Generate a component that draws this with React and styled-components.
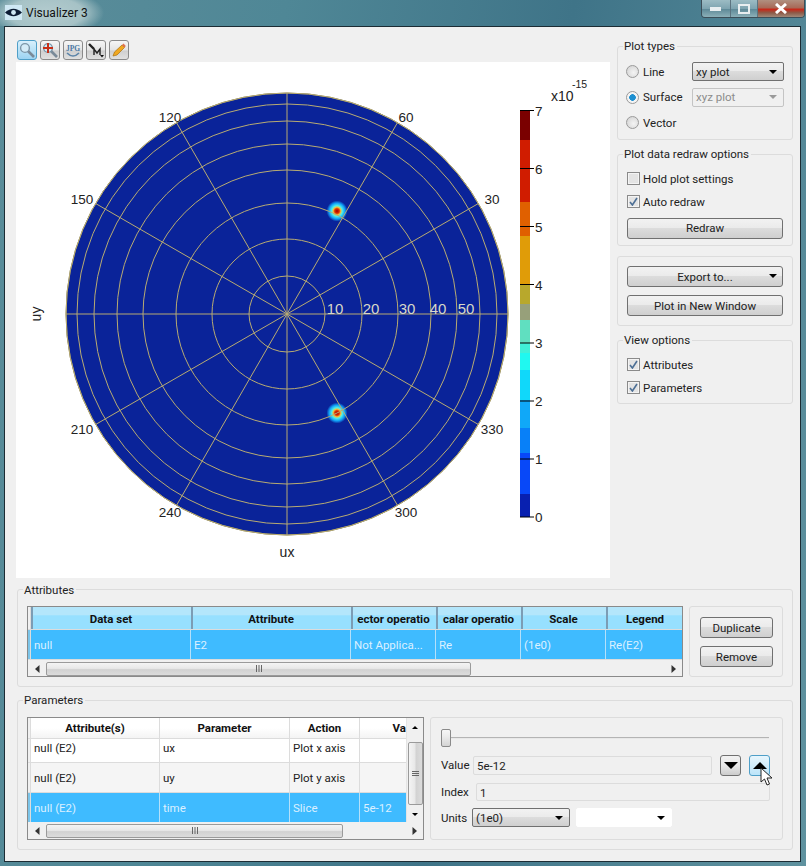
import React from "react";
import styled, { createGlobalStyle } from "styled-components";

const GlobalStyle = createGlobalStyle`
  html, body {
    margin: 0;
    padding: 0;
    width: 806px;
    height: 866px;
    overflow: hidden;
    background: #3f6f80;
    font-family: Roboto, "Noto Sans", sans-serif;
    font-size: 11.5px;
    color: #222;
  }
  * { box-sizing: border-box; }
`;

const Win = styled.div`
  width: 806px;
  height: 866px;
  display: flex;
  flex-direction: column;
  padding: 0 5px 4px 4px;
  background: linear-gradient(100deg, #5b8d9a 0%, #4f8796 30%, #3f7488 60%, #5f929f 100%);
`;

const TitleBar = styled.div`
  height: 26px;
  margin: 0 -5px 0 -4px;
  flex: none;
  display: flex;
  align-items: flex-start;
  justify-content: space-between;
  position: relative;
  background: radial-gradient(ellipse 58px 24px at 46px 13px, #b4cccf 0%, #a6c2c6 65%, transparent 100%);
`;

const TitleText = styled.div`
  display: flex;
  align-items: center;
  gap: 4px;
  padding: 4px 0 0 5px;
  font-size: 12px;
  color: #111;
`;

const Caption = styled.div`
  display: flex;
  height: 18px;
  margin-right: 1px;
  border: 1px solid #3c4e58;
  border-top: none;
  border-radius: 0 0 4px 4px;
  overflow: hidden;
`;

const CaptionBtn = styled.div`
  width: ${(p) => p.$w}px;
  display: flex;
  align-items: center;
  justify-content: center;
  border-left: ${(p) => (p.$first ? "none" : "1px solid #5c7480")};
  background: ${(p) =>
    p.$close
      ? "linear-gradient(#b09080 0%, #a86a58 45%, #c82818 55%, #8c5a48 75%, #a08878 100%)"
      : "linear-gradient(#9cbcc4 0%, #7ea4b0 50%, #5f8a98 55%, #8cb0b8 100%)"};
`;

const Body = styled.div`
  flex: 1;
  background: #f0f0f0;
  border: 1px solid #1c2c34;
  padding: 13px 7px 9px 11px;
  display: flex;
  flex-direction: column;
`;

const TopRow = styled.div`
  display: flex;
  gap: 7px;
  height: 549px;
  flex: none;
`;

const PlotColumn = styled.div`
  width: 594px;
  display: flex;
  flex-direction: column;
`;

const ToolBar = styled.div`
  display: flex;
  gap: 3px;
  height: 22px;
  padding-left: 1px;
`;

const ToolBtn = styled.div`
  width: 20px;
  height: 20px;
  border: 1px solid ${(p) => (p.$active ? "#4f9fc8" : "#8a8a8a")};
  border-radius: 3px;
  background: ${(p) =>
    p.$active
      ? "linear-gradient(#d8f0fc, #9cd4f2)"
      : "linear-gradient(#f6f6f6, #e4e4e4 50%, #cfcfcf 55%, #e0e0e0)"};
  display: flex;
  align-items: center;
  justify-content: center;
`;

const PlotArea = styled.div`
  width: 594px;
  height: 516px;
  background: #fff;
`;

const SideColumn = styled.div`
  width: 176px;
  display: flex;
  flex-direction: column;
  padding-top: 6px;
`;

const Group = styled.div`
  margin-top: ${(p) => p.$mt || 0}px;
  height: ${(p) => p.$h}px;
  width: ${(p) => (p.$w ? `${p.$w}px` : "auto")};
  flex: none;
  border: 1px solid #dcdcdc;
  border-radius: 3px;
  position: relative;
`;

const Legend = styled.div`
  position: absolute;
  top: ${(p) => p.$top || -8}px;
  left: 5px;
  padding: 0 2px 0 1px;
  line-height: 15px;
  background: #f0f0f0;
`;

const Row = styled.div`
  display: flex;
  align-items: center;
  height: ${(p) => p.$h || 25}px;
  margin-top: ${(p) => p.$mt || 0}px;
  padding-left: ${(p) => p.$pl || 0}px;
  flex: none;
`;

const Inner = styled.div`
  padding: ${(p) => p.$p || "0"};
  display: flex;
  flex-direction: column;
  gap: ${(p) => p.$gap || 0}px;
`;

const RadioDot = styled.span`
  width: 13px;
  height: 13px;
  border-radius: 50%;
  border: 1px solid #9a9a9a;
  background: ${(p) =>
    p.$on
      ? "radial-gradient(circle, #1d8fd0 0 3px, #f4f4f4 3.6px)"
      : "radial-gradient(circle at 60% 60%, #f4f4f4, #cfcfcf)"};
  margin-right: 4px;
  flex: none;
`;

const RadioLabel = styled.span`
  width: 49px;
  flex: none;
`;

const CheckBox = styled.span`
  width: 13px;
  height: 13px;
  border: 1px solid #8a8a8a;
  background: #e4e4e4;
  margin-right: 3px;
  flex: none;
  display: flex;
  align-items: center;
  justify-content: center;
  box-shadow: inset 0 0 0 1px #f4f4f4;
`;

const Btn = styled.div`
  height: 21px;
  width: ${(p) => (p.$w ? `${p.$w}px` : "auto")};
  border: 1px solid #707070;
  border-radius: 3px;
  background: linear-gradient(#f2f2f2 0%, #ebebeb 45%, #dcdcdc 50%, #cfcfcf 100%);
  display: flex;
  align-items: center;
  justify-content: center;
  position: relative;
  flex: none;
`;

const Arrow = styled.span`
  width: 0;
  height: 0;
  border-left: ${(p) => p.$s || 4}px solid transparent;
  border-right: ${(p) => p.$s || 4}px solid transparent;
  border-top: ${(p) => (p.$up ? "none" : `${p.$t || 4}px solid ${p.$c || "#000"}`)};
  border-bottom: ${(p) => (p.$up ? `${p.$t || 4}px solid ${p.$c || "#000"}` : "none")};
`;

const BtnArrow = styled.span`
  position: absolute;
  right: 5px;
  top: 7px;
  display: flex;
`;

const Combo = styled.div`
  width: ${(p) => p.$w}px;
  height: 19px;
  margin-left: ${(p) => p.$ml || 0}px;
  border: 1px solid ${(p) => (p.$off ? "#c4c4c4" : p.$flat ? "#fff" : "#707070")};
  border-radius: 2px;
  padding: 0 6px 0 3px;
  color: ${(p) => (p.$off ? "#8c8c8c" : "#222")};
  background: ${(p) =>
    p.$off
      ? "#f0f0f0"
      : p.$flat
      ? "#fff"
      : "linear-gradient(#f2f2f2 0%, #ebebeb 45%, #dcdcdc 50%, #cfcfcf 100%)"};
  display: flex;
  align-items: center;
  justify-content: space-between;
  flex: none;
`;

const BottomGroups = styled.div`
  display: flex;
  flex-direction: column;
  padding-left: 1px;
`;

const GroupRow = styled.div`
  display: flex;
  height: 100%;
  padding: 16px 9px 9px;
  gap: 6px;
`;

const Table = styled.div`
  width: ${(p) => p.$w}px;
  height: ${(p) => p.$h}px;
  border: 1px solid #8a8a8a;
  background: #f0f0f0;
  display: flex;
  flex-direction: column;
  flex: none;
  position: relative;
  overflow: hidden;
`;

const TableBody = styled.div`
  flex: 1;
  display: flex;
  min-height: 0;
`;

const Columns = styled.div`
  flex: 1;
  min-width: 0;
  display: flex;
  flex-direction: column;
  overflow: hidden;
`;

const TRow = styled.div`
  display: flex;
  height: ${(p) => p.$h}px;
  flex: none;
  background: ${(p) =>
    p.$selected ? "#3fbbff" : p.$alt ? "#f5f5f5" : "#fff"};
  border-bottom: 1px solid #dcdcdc;
`;

const Handle = styled.div`
  width: 3px;
  flex: none;
  background: ${(p) => (p.$selected ? "#7cc4e8" : "#f0f0f0")};
  border-right: 1px solid #dcdcdc;
`;

const BlueHead = styled.div`
  width: ${(p) => p.$w}px;
  flex: none;
  height: 100%;
  padding-right: 2px;
  font-weight: 700;
  line-height: 24px;
  white-space: nowrap;
  overflow: hidden;
  color: #111;
  display: flex;
  justify-content: center;
  border-left: 2px solid #7c9cb4;
  background: linear-gradient(#b4e6fb 0%, #b4e6fb 35%, #97e0ff 40%, #97e0ff 100%);
`;

const LightHead = styled.div`
  width: ${(p) => p.$w}px;
  flex: none;
  height: 100%;
  font-weight: 700;
  line-height: 21px;
  white-space: nowrap;
  overflow: hidden;
  color: #111;
  display: flex;
  justify-content: ${(p) => (p.$end ? "flex-end" : "center")};
  border-right: 1px solid #dcdcdc;
  background: linear-gradient(#fff, #fff 50%, #f4f4f4);
`;

const Cell = styled.div`
  width: ${(p) => p.$w}px;
  flex: none;
  height: 100%;
  padding: ${(p) => (p.$top ? "2px" : "0")} 0 0 3px;
  display: flex;
  align-items: ${(p) => (p.$top ? "flex-start" : "center")};
  white-space: nowrap;
  overflow: hidden;
  color: ${(p) => (p.$selected ? "#dcf0ff" : "#222")};
  border-right: 1px solid ${(p) => (p.$selected ? "#b4e0fa" : "#dcdcdc")};
`;

const HScroll = styled.div`
  height: 17px;
  flex: none;
  display: flex;
  align-items: center;
  justify-content: space-between;
  background: #f0f0f0;
`;

const ScrollEnd = styled.div`
  width: ${(p) => p.$w}px;
  height: ${(p) => (p.$h ? `${p.$h}px` : "auto")};
  flex: none;
  display: flex;
  align-items: center;
  justify-content: center;
`;

const HTrack = styled.div`
  flex: 1;
  min-width: 0;
`;

const Thumb = styled.div`
  width: ${(p) => p.$w}px;
  height: 14px;
  border: 1px solid #9a9a9a;
  border-radius: 2px;
  background: linear-gradient(#f4f4f4, #e8e8e8 45%, #d2d2d2 55%, #dcdcdc);
  display: flex;
  align-items: center;
  justify-content: center;
`;

const VScroll = styled.div`
  width: 17px;
  flex: none;
  display: flex;
  flex-direction: column;
  align-items: center;
  background: #f0f0f0;
  border-left: 1px solid #e4e4e4;
`;

const VTrack = styled.div`
  flex: 1;
  min-height: 0;
  padding-top: 6px;
`;

const VThumb = styled.div`
  width: 15px;
  height: 63px;
  border: 1px solid #9a9a9a;
  border-radius: 2px;
  background: linear-gradient(90deg, #f4f4f4, #e8e8e8 45%, #d2d2d2 55%, #dcdcdc);
  display: flex;
  align-items: center;
  justify-content: center;
`;

const Label = styled.span`
  width: ${(p) => p.$w}px;
  flex: none;
`;

const TextField = styled.div`
  width: ${(p) => p.$w}px;
  height: ${(p) => p.$h}px;
  flex: none;
  border: 1px solid #dcdcdc;
  border-radius: 2px;
  padding: 1px 0 0 3px;
  display: flex;
  align-items: center;
`;

const SpinBtn = styled.div`
  width: 21px;
  height: 21px;
  flex: none;
  margin-left: 8px;
  border: 1px solid ${(p) => (p.$hover ? "#4f9fc8" : "#707070")};
  border-radius: 3px;
  background: ${(p) =>
    p.$hover
      ? "linear-gradient(#e8f6fd, #bce4f9)"
      : "linear-gradient(#f2f2f2, #e8e8e8 50%, #cccccc)"};
  display: flex;
  align-items: center;
  justify-content: center;
  position: relative;
`;

const Slider = styled.div`
  height: 20px;
  width: 328px;
  position: relative;
  display: flex;
  align-items: center;
`;

const SliderLine = styled.div`
  flex: 1;
  height: 2px;
  background: #b4b4b4;
  border-bottom: 1px solid #e8e8e8;
`;

const SliderKnob = styled.div`
  position: absolute;
  left: 0;
  top: 1px;
  width: 10px;
  height: 18px;
  border: 1px solid #8a8a8a;
  border-radius: 2px;
  background: linear-gradient(#f6f6f6, #ececec 40%, #d4d4d4);
`;

const CursorIcon = styled.svg`
  position: absolute;
  left: 10px;
  top: 11px;
`;

const CheckMark = () => (
  <svg width="9" height="9" viewBox="0 0 9 9">
    <path d="M1 5 L3.4 8 L8 1" fill="none" stroke="#4d6f95" strokeWidth="1.6" />
  </svg>
);

const Grip = () => (
  <svg width="8" height="7"><path d="M1.5 0V7M4 0V7M6.5 0V7" stroke="#666" /></svg>
);

const LeftTri = () => (
  <svg width="5" height="8" viewBox="0 0 5 8"><path d="M4.5 0 V8 L0 4Z" fill="#333" /></svg>
);

const RightTri = () => (
  <svg width="5" height="8" viewBox="0 0 5 8"><path d="M0.5 0 V8 L5 4Z" fill="#333" /></svg>
);

function Check({ on, children }) {
  return (
    <Row $h={23} $pl={9}>
      <CheckBox>{on && <CheckMark />}</CheckBox>
      {children}
    </Row>
  );
}

function HBar({ thumb }) {
  return (
    <HScroll>
      <ScrollEnd $w={18}><LeftTri /></ScrollEnd>
      <HTrack><Thumb $w={thumb}><Grip /></Thumb></HTrack>
      <ScrollEnd $w={18}><RightTri /></ScrollEnd>
    </HScroll>
  );
}

const RINGS = [38, 75, 111, 144, 170, 193, 210, 221];
const SPOKES = [0, 30, 60, 90, 120, 150];
const GRID = "#b8ab72";

const BANDS = [
  [110, 140, "#7a0000"],
  [140, 202, "#d01c00"],
  [202, 236, "#e06000"],
  [236, 285, "#e09c08"],
  [285, 304, "#b8a82c"],
  [304, 320, "#97a07a"],
  [320, 343, "#60dfc0"],
  [343, 353, "#40f0d8"],
  [353, 370, "#20f8f0"],
  [370, 400, "#10d8fa"],
  [400, 428, "#10a8f8"],
  [428, 453, "#0880f8"],
  [453, 494, "#0848f8"],
  [494, 517, "#0820b0"],
];

const ANGLES = [
  ["120", 170, 122],
  ["60", 406, 122],
  ["150", 82, 204],
  ["30", 492, 204],
  ["210", 82, 434],
  ["330", 492, 434],
  ["240", 170, 517],
  ["300", 406, 517],
];

const RADIALS = [
  ["10", 335],
  ["20", 371],
  ["30", 407],
  ["40", 438],
  ["50", 466],
];

function PolarPlot() {
  const cx = 287;
  const cy = 314;
  const R = 221;
  return (
    <svg
      width="594"
      height="516"
      viewBox="16 62 594 516"
      fontFamily="'Liberation Sans', Arial, sans-serif"
      fontSize="13.5"
      fill="#222"
    >
      <defs>
        <radialGradient id="spot">
          <stop offset="0" stopColor="#a00000" />
          <stop offset="0.22" stopColor="#e03000" />
          <stop offset="0.36" stopColor="#f0c040" />
          <stop offset="0.5" stopColor="#50f0e8" />
          <stop offset="0.75" stopColor="#10a0f8" />
          <stop offset="1" stopColor="#0a2399" />
        </radialGradient>
      </defs>
      <circle cx={cx} cy={cy} r={R} fill="#0a2399" stroke="#8a8458" strokeWidth="1" />
      <circle cx="337" cy="211" r="10.5" fill="url(#spot)" />
      <circle cx="337" cy="413" r="10.5" fill="url(#spot)" />
      {RINGS.map((r) => (
        <circle key={r} cx={cx} cy={cy} r={r} fill="none" stroke={GRID} strokeWidth="1" />
      ))}
      {SPOKES.map((a) => {
        const rad = (a * Math.PI) / 180;
        const dx = R * Math.cos(rad);
        const dy = R * Math.sin(rad);
        return (
          <line key={a} x1={cx - dx} y1={cy + dy} x2={cx + dx} y2={cy - dy} stroke={GRID} strokeWidth="1" />
        );
      })}
      {RADIALS.map(([t, x]) => (
        <text key={t} x={x} y="314" textAnchor="middle" fontSize="15" fill="#d8d8c8">
          {t}
        </text>
      ))}
      {ANGLES.map(([t, x, y]) => (
        <text key={t} x={x} y={y} textAnchor="middle">
          {t}
        </text>
      ))}
      <text x="287" y="557" textAnchor="middle" fontSize="14">ux</text>
      <text x="41" y="314" textAnchor="middle" fontSize="14" transform="rotate(-90 41 314)">uy</text>
      {BANDS.map(([a, b, c]) => (
        <rect key={a} x="520" y={a} width="10" height={b - a} fill={c} />
      ))}
      {[110.5, 168.5, 226.5, 284.5, 343, 401, 459, 517].map((y, i) => (
        <g key={y}>
          <line x1="520" x2="534" y1={y} y2={y} stroke="#000" strokeWidth="1" />
          <text x="535" y={y + 5}>{7 - i}</text>
        </g>
      ))}
      <text x="551" y="101" fontSize="14">x10</text>
      <text x="572" y="88" fontSize="10.5">-15</text>
    </svg>
  );
}

const Lens = ({ plus }) => (
  <svg width="16" height="16" viewBox="0 0 16 16">
    <line x1="9" y1="9" x2="15" y2="15" stroke="#7a8a98" strokeWidth="2.6" />
    <circle cx="6" cy="6" r="4.4" fill="#d4ecf8" stroke="#7c96a8" strokeWidth="1.4" />
    {plus && <path d="M6 1 V11 M1 6 H11" stroke="#c83018" strokeWidth="2" />}
  </svg>
);

export default function App() {
  return (
    <>
      <GlobalStyle />
      <Win>
        <TitleBar>
          <TitleText>
            <svg width="17" height="17" viewBox="0 0 17 17">
              <rect x="0" y="1" width="17" height="15" fill="#cfe8f4" />
              <path d="M0 8.5 Q8.5 1 17 8.5 Q8.5 16 0 8.5Z" fill="#0c1c34" />
              <circle cx="8.5" cy="8.5" r="2.4" fill="#cfe8f4" />
            </svg>
            Visualizer 3
          </TitleText>
          <Caption>
            <CaptionBtn $w={28} $first>
              <svg width="12" height="6"><rect x="0" y="1" width="11" height="4" fill="#e8eef0" /></svg>
            </CaptionBtn>
            <CaptionBtn $w={27}>
              <svg width="12" height="10"><rect x="1" y="1" width="10" height="8" fill="none" stroke="#e8eef0" strokeWidth="2" /></svg>
            </CaptionBtn>
            <CaptionBtn $w={47} $close>
              <svg width="14" height="11"><path d="M2 1 L12 10 M12 1 L2 10" stroke="#fff" strokeWidth="3" /></svg>
            </CaptionBtn>
          </Caption>
        </TitleBar>
        <Body>
          <TopRow>
            <PlotColumn>
              <ToolBar>
                <ToolBtn $active><Lens /></ToolBtn>
                <ToolBtn><Lens plus /></ToolBtn>
                <ToolBtn>
                  <svg width="18" height="18" viewBox="0 0 18 18">
                    <path d="M3 12 Q9 18 15 12" fill="none" stroke="#5c84a8" strokeWidth="1.6" />
                    <text x="9" y="10" textAnchor="middle" fontSize="7.5" fontWeight="700" fontFamily="'Liberation Serif', serif" fill="#4a78a4">JPG</text>
                  </svg>
                </ToolBtn>
                <ToolBtn>
                  <svg width="18" height="18" viewBox="0 0 18 18">
                    <path d="M2 3 L7 8" stroke="#222" strokeWidth="2.4" />
                    <path d="M7 14 V8 L10 12 L13 8 V14" fill="none" stroke="#222" strokeWidth="1.4" />
                    <path d="M13 14 H17 L15 16.5Z" fill="#111" />
                  </svg>
                </ToolBtn>
                <ToolBtn>
                  <svg width="16" height="16" viewBox="0 0 16 16">
                    <path d="M2 14 L3.5 10 L11 3 L13.5 5.5 L6 13Z" fill="#f0a820" stroke="#a87010" strokeWidth="0.7" />
                    <path d="M11 3 L12.5 1.6 L14.8 4 L13.5 5.5Z" fill="#e07050" />
                  </svg>
                </ToolBtn>
              </ToolBar>
              <PlotArea><PolarPlot /></PlotArea>
            </PlotColumn>
            <SideColumn>
              <Group $h={94}>
                <Legend>Plot types</Legend>
                <Inner $p="12px 0 0 8px">
                  <Row>
                    <RadioDot />
                    <RadioLabel>Line</RadioLabel>
                    <Combo $w={92}>xy plot<Arrow /></Combo>
                  </Row>
                  <Row $h={26}>
                    <RadioDot $on />
                    <RadioLabel>Surface</RadioLabel>
                    <Combo $w={92} $off>xyz plot<Arrow $c="#9a9a9a" /></Combo>
                  </Row>
                  <Row>
                    <RadioDot />
                    <RadioLabel>Vector</RadioLabel>
                  </Row>
                </Inner>
              </Group>
              <Group $h={92} $mt={14}>
                <Legend>Plot data redraw options</Legend>
                <Inner $p="12px 0 0 0">
                  <Check>Hold plot settings</Check>
                  <Check on>Auto redraw</Check>
                  <Row $h={30} $pl={9}><Btn $w={156}>Redraw</Btn></Row>
                </Inner>
              </Group>
              <Group $h={70} $mt={10}>
                <Inner $p="9px 9px 0" $gap={8}>
                  <Btn>Export to...<BtnArrow><Arrow /></BtnArrow></Btn>
                  <Btn>Plot in New Window</Btn>
                </Inner>
              </Group>
              <Group $h={64} $mt={14}>
                <Legend>View options</Legend>
                <Inner $p="12px 0 0 0">
                  <Check on>Attributes</Check>
                  <Check on>Parameters</Check>
                </Inner>
              </Group>
            </SideColumn>
          </TopRow>
          <BottomGroups>
            <Group $h={98} $w={776}>
              <Legend $top={-7}>Attributes</Legend>
              <GroupRow>
                <Table $w={656} $h={71}>
                  <TRow $h={23}>
                    <Handle />
                    <BlueHead $w={160}>Data set</BlueHead>
                    <BlueHead $w={160}>Attribute</BlueHead>
                    <BlueHead $w={85}>ector operatio</BlueHead>
                    <BlueHead $w={85}>calar operatio</BlueHead>
                    <BlueHead $w={85}>Scale</BlueHead>
                    <BlueHead $w={78}>Legend</BlueHead>
                  </TRow>
                  <TRow $h={30} $selected>
                    <Handle $selected />
                    <Cell $w={160} $selected>null</Cell>
                    <Cell $w={160} $selected>E2</Cell>
                    <Cell $w={85} $selected>Not Applica...</Cell>
                    <Cell $w={85} $selected>Re</Cell>
                    <Cell $w={85} $selected>(1e0)</Cell>
                    <Cell $w={78} $selected>Re(E2)</Cell>
                  </TRow>
                  <HBar thumb={425} />
                </Table>
                <Group $h={71} $w={94}>
                  <Inner $p="10px 0 0 10px" $gap={8}>
                    <Btn $w={73}>Duplicate</Btn>
                    <Btn $w={73}>Remove</Btn>
                  </Inner>
                </Group>
              </GroupRow>
            </Group>
            <Group $h={150} $w={776} $mt={13}>
              <Legend>Parameters</Legend>
              <GroupRow>
                <Table $w={397} $h={123}>
                  <TableBody>
                    <Columns>
                      <TRow $h={21}>
                        <Handle />
                        <LightHead $w={129}>Attribute(s)</LightHead>
                        <LightHead $w={130}>Parameter</LightHead>
                        <LightHead $w={70}>Action</LightHead>
                        <LightHead $w={47} $end>Va</LightHead>
                      </TRow>
                      <TRow $h={24}>
                        <Handle />
                        <Cell $w={129} $top>null (E2)</Cell>
                        <Cell $w={130} $top>ux</Cell>
                        <Cell $w={70} $top>Plot x axis</Cell>
                        <Cell $w={60} />
                      </TRow>
                      <TRow $h={30} $alt>
                        <Handle />
                        <Cell $w={129}>null (E2)</Cell>
                        <Cell $w={130}>uy</Cell>
                        <Cell $w={70}>Plot y axis</Cell>
                        <Cell $w={60} />
                      </TRow>
                      <TRow $h={30} $selected>
                        <Handle $selected />
                        <Cell $w={129} $selected>null (E2)</Cell>
                        <Cell $w={130} $selected>time</Cell>
                        <Cell $w={70} $selected>Slice</Cell>
                        <Cell $w={60} $selected>5e-12</Cell>
                      </TRow>
                    </Columns>
                    <VScroll>
                      <ScrollEnd $w={15} $h={18}><Arrow $s={3} $t={3} $up /></ScrollEnd>
                      <VTrack>
                        <VThumb>
                          <svg width="7" height="6"><path d="M0 .5H7M0 2.5H7M0 4.5H7" stroke="#666" /></svg>
                        </VThumb>
                      </VTrack>
                      <ScrollEnd $w={15} $h={16}><Arrow $s={3} $t={3} /></ScrollEnd>
                    </VScroll>
                  </TableBody>
                  <HBar thumb={297} />
                </Table>
                <Group $h={123} $w={353}>
                  <Inner $p="10px 0 0 10px">
                    <Slider>
                      <SliderLine />
                      <SliderKnob />
                    </Slider>
                    <Row $h={28} $mt={3}>
                      <Label $w={32}>Value</Label>
                      <TextField $w={239} $h={19}>5e-12</TextField>
                      <SpinBtn><Arrow $s={7} $t={7} /></SpinBtn>
                      <SpinBtn $hover>
                        <Arrow $s={7} $t={7} $up />
                        <CursorIcon width="13" height="19" viewBox="0 0 13 19">
                          <path d="M1 1 V15 L4.5 12 L7 18 L9.5 17 L7 11 H12Z" fill="#fff" stroke="#222" strokeWidth="1" />
                        </CursorIcon>
                      </SpinBtn>
                    </Row>
                    <Row $h={26}>
                      <Label $w={35}>Index</Label>
                      <TextField $w={294} $h={18}>1</TextField>
                    </Row>
                    <Row $h={25}>
                      <Label $w={31}>Units</Label>
                      <Combo $w={98}>(1e0)<Arrow /></Combo>
                      <Combo $w={96} $ml={6} $flat><span /><Arrow /></Combo>
                    </Row>
                  </Inner>
                </Group>
              </GroupRow>
            </Group>
          </BottomGroups>
        </Body>
      </Win>
    </>
  );
}
